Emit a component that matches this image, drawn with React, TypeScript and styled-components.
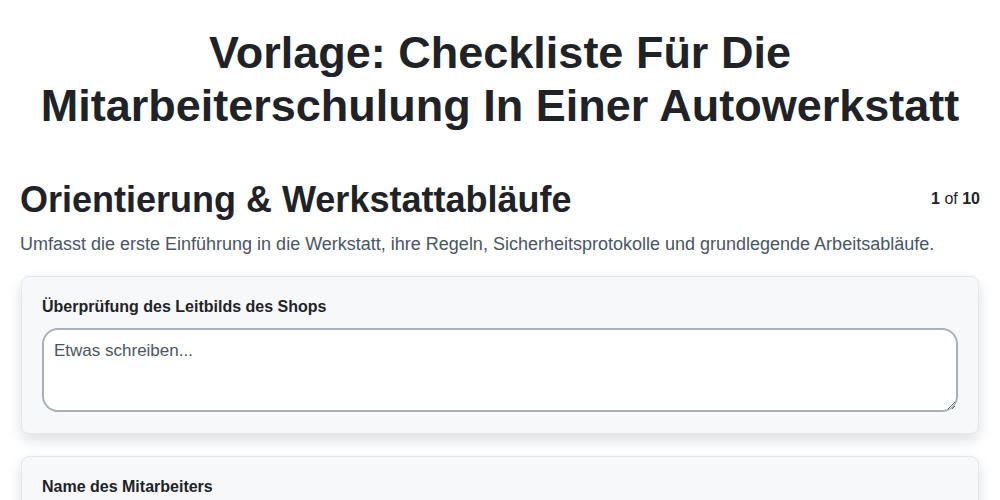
import { FC } from 'react';
import styled, { createGlobalStyle } from 'styled-components';

const GlobalStyle = createGlobalStyle`
  * {
    box-sizing: border-box;
  }
  body {
    margin: 0;
    background: #ffffff;
    font-family: 'Liberation Sans', Arial, sans-serif;
    color: #1f2328;
  }
`;

interface IField {
  label: string;
}

const fields: IField[] = [
  { label: 'Überprüfung des Leitbilds des Shops' },
  { label: 'Name des Mitarbeiters' },
  { label: 'Datum der Schulung' },
];

const Field: FC<IField> = ({ label }) => (
  <Card>
    <Label>{label}</Label>
    <TextArea placeholder="Etwas schreiben..." rows={3} />
  </Card>
);

export default function App() {
  return (
    <>
      <GlobalStyle />
      <Page>
        <Title>Vorlage: Checkliste Für Die Mitarbeiterschulung In Einer Autowerkstatt</Title>
        <SectionHead>
          <SectionTitle>Orientierung &amp; Werkstattabläufe</SectionTitle>
          <Counter>
            <b>1</b> of <b>10</b>
          </Counter>
        </SectionHead>
        <Description>
          Umfasst die erste Einführung in die Werkstatt, ihre Regeln, Sicherheitsprotokolle und grundlegende
          Arbeitsabläufe.
        </Description>
        <List>
          {fields.map((f) => (
            <Field key={f.label} label={f.label} />
          ))}
        </List>
      </Page>
    </>
  );
}

const Page = styled.div`
  padding: 26px 20px 40px;
`;

const Title = styled.h1`
  margin: 0 auto 47px;
  max-width: 960px;
  text-align: center;
  font-size: 45px;
  line-height: 53px;
  font-weight: 700;
  color: #1f2328;
`;

const SectionHead = styled.div`
  display: flex;
  justify-content: space-between;
  align-items: flex-start;
`;

const SectionTitle = styled.h2`
  margin: 0;
  font-size: 36px;
  line-height: 42px;
  font-weight: 700;
  color: #1f2328;
`;

const Counter = styled.div`
  font-size: 16px;
  line-height: 20px;
  margin-top: 10px;
  color: #1f2328;
  b {
    font-weight: 700;
  }
`;

const Description = styled.p`
  margin: 11px 0 20px;
  font-size: 18px;
  line-height: 24px;
  color: #4a5563;
`;

const List = styled.div`
  display: flex;
  flex-direction: column;
  gap: 22px;
  padding: 0 1px;
`;

const Card = styled.div`
  background: #f7f8fa;
  border: 1px solid #e4e6ea;
  border-radius: 8px;
  padding: 20px 20px 21px;
  box-shadow: 0 6px 14px rgba(15, 23, 42, 0.14);
`;

const Label = styled.div`
  font-size: 16px;
  line-height: 20px;
  font-weight: 700;
  color: #1f2328;
  margin-bottom: 11px;
`;

const TextArea = styled.textarea`
  display: block;
  width: 100%;
  height: 84px;
  border: 2px solid #a8b0b9;
  border-radius: 16px;
  background: #ffffff;
  padding: 10px 10px;
  font-family: 'Liberation Sans', Arial, sans-serif;
  font-size: 17px;
  line-height: 22px;
  color: #1f2328;
  resize: vertical;
  outline: none;
  &::placeholder {
    color: #4a5563;
  }
`;
